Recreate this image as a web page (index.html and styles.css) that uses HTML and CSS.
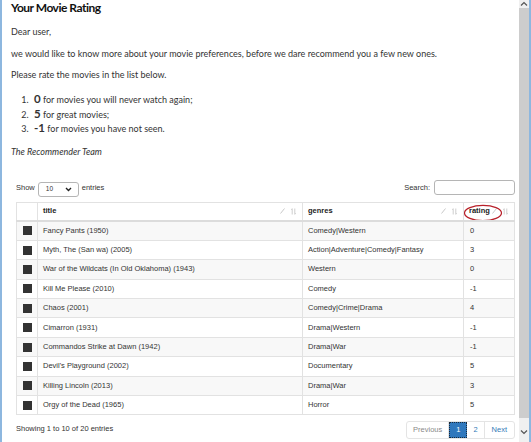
FILE: index.html
```html
<!DOCTYPE html>
<html lang="en">
<head>
    <meta charset="UTF-8"/>
    <meta name="viewport" content="width=device-width, initial-scale=1.0">
    <title>Your Movie Rating</title>
    <link rel="stylesheet" href="styles.css">
</head>

<body>
    <div class="window">
        <main class="page">
            <h1>Your Movie Rating</h1>
            <p>Dear user,</p>
            <p>we would like to know more about your movie preferences, before we dare recommend you a few new ones.</p>
            <p>Please rate the movies in the list below.</p>
            <ol class="scale">
                <li><b>0</b> for movies you will never watch again;</li>
                <li><b>5</b> for great movies;</li>
                <li><b>-1</b> for movies you have not seen.</li>
            </ol>
            <p class="sign">The Recommender Team</p>

            <section class="dt">
                <div class="dt-top">
                    <div class="dt-length">
                        Show
                        <span class="select">10
                            <svg width="7" height="5" viewBox="0 0 7 5"><path d="M1 1 L3.5 3.5 L6 1" fill="none" stroke="#222" stroke-width="1.4"/></svg>
                        </span>
                        entries
                    </div>
                    <div class="dt-search">
                        Search:
                        <span class="search-box"></span>
                    </div>
                </div>

                <table class="movies">
                    <colgroup>
                        <col class="c-check">
                        <col class="c-title">
                        <col class="c-genres">
                        <col class="c-rating">
                    </colgroup>
                    <thead>
                        <tr>
                            <th></th>
                            <th><div class="th-in"><span>title</span><span class="tools"><svg class="edit" width="5" height="6" viewBox="0 0 5 6"><path d="M0.5 5.5 L4.5 0.5" stroke="#c8c8c8" stroke-width="1"/></svg><svg class="sort" width="5" height="7" viewBox="0 0 5 7"><path d="M1.2 6.5 V0.8 M0.2 1.8 L1.2 0.6 M3.8 0.5 V6.2 M4.8 5.2 L3.8 6.4" stroke="#c8c8c8" stroke-width="0.9" fill="none"/></svg></span></div></th>
                            <th><div class="th-in"><span>genres</span><span class="tools"><svg class="edit" width="5" height="6" viewBox="0 0 5 6"><path d="M0.5 5.5 L4.5 0.5" stroke="#c8c8c8" stroke-width="1"/></svg><svg class="sort" width="5" height="7" viewBox="0 0 5 7"><path d="M1.2 6.5 V0.8 M0.2 1.8 L1.2 0.6 M3.8 0.5 V6.2 M4.8 5.2 L3.8 6.4" stroke="#c8c8c8" stroke-width="0.9" fill="none"/></svg></span></div></th>
                            <th class="marked"><div class="th-in"><span>rating</span><span class="tools"><svg class="edit" width="5" height="6" viewBox="0 0 5 6"><path d="M0.5 5.5 L4.5 0.5" stroke="#c8c8c8" stroke-width="1"/></svg><svg class="sort" width="5" height="7" viewBox="0 0 5 7"><path d="M1.2 6.5 V0.8 M0.2 1.8 L1.2 0.6 M3.8 0.5 V6.2 M4.8 5.2 L3.8 6.4" stroke="#c8c8c8" stroke-width="0.9" fill="none"/></svg></span></div>
                                <svg class="circle" width="40" height="18" viewBox="0 0 40 18"><ellipse cx="20" cy="9" rx="18.5" ry="7.6" fill="none" stroke="#b8202a" stroke-width="1.2"/></svg>
                            </th>
                        </tr>
                    </thead>
                    <tbody>
                        <tr><td><span class="box"></span></td><td>Fancy Pants (1950)</td><td>Comedy|Western</td><td>0</td></tr>
                        <tr><td><span class="box"></span></td><td>Myth, The (San wa) (2005)</td><td>Action|Adventure|Comedy|Fantasy</td><td>3</td></tr>
                        <tr><td><span class="box"></span></td><td>War of the Wildcats (In Old Oklahoma) (1943)</td><td>Western</td><td>0</td></tr>
                        <tr><td><span class="box"></span></td><td>Kill Me Please (2010)</td><td>Comedy</td><td>-1</td></tr>
                        <tr><td><span class="box"></span></td><td>Chaos (2001)</td><td>Comedy|Crime|Drama</td><td>4</td></tr>
                        <tr><td><span class="box"></span></td><td>Cimarron (1931)</td><td>Drama|Western</td><td>-1</td></tr>
                        <tr><td><span class="box"></span></td><td>Commandos Strike at Dawn (1942)</td><td>Drama|War</td><td>-1</td></tr>
                        <tr><td><span class="box"></span></td><td>Devil's Playground (2002)</td><td>Documentary</td><td>5</td></tr>
                        <tr><td><span class="box"></span></td><td>Killing Lincoln (2013)</td><td>Drama|War</td><td>3</td></tr>
                        <tr><td><span class="box"></span></td><td>Orgy of the Dead (1965)</td><td>Horror</td><td>5</td></tr>
                    </tbody>
                </table>

                <div class="dt-bottom">
                    <div class="dt-info">Showing 1 to 10 of 20 entries</div>
                    <ul class="pager">
                        <li class="disabled">Previous</li>
                        <li class="current">1</li>
                        <li>2</li>
                        <li>Next</li>
                    </ul>
                </div>
            </section>
        </main>

        <div class="scrollbar">
            <span class="arrow">
                <svg width="8" height="6" viewBox="0 0 8 6"><path d="M1 4.5 L4 1.5 L7 4.5" fill="none" stroke="#555" stroke-width="1.2"/></svg>
            </span>
            <div class="thumb"></div>
            <div class="track"></div>
            <span class="arrow">
                <svg width="8" height="6" viewBox="0 0 8 6"><path d="M1 1.5 L4 4.5 L7 1.5" fill="none" stroke="#555" stroke-width="1.2"/></svg>
            </span>
            <div class="track-end"></div>
        </div>
    </div>
</body>
</html>
```

FILE: styles.css
```css
* {
    margin: 0;
    padding: 0;
    box-sizing: border-box;
}

body {
    font-family: Lato, 'Open Sans', sans-serif;
    background-color: #fff;
    color: #333;
}

.window {
    display: flex;
    width: 531px;
    height: 442px;
    border-left: 2px solid #8db7df;
    border-right: 2px solid #8db7df;
    overflow: hidden;
}

.page {
    flex: 1;
    padding-left: 9px;
    font-size: 9px;
    line-height: 13px;
}

.page h1 {
    font-size: 12px;
    line-height: 16px;
    font-weight: bold;
    letter-spacing: -0.5px;
    color: #111;
    margin-bottom: 9px;
}

.page p {
    margin-bottom: 8.5px;
}

.scale {
    margin: 11px 0 9px 0;
    padding-left: 20px;
    line-height: 13.5px;
}

.scale li {
    padding-left: 3px;
}

.scale b {
    font-size: 11.5px;
}

.page p.sign {
    font-style: italic;
    margin-bottom: 0;
}

.dt {
    margin: 21px 4px 0 5px;
    font-family: 'Liberation Sans', Arial, sans-serif;
    font-size: 7.5px;
    line-height: 10px;
    color: #333;
}

.dt-top {
    display: flex;
    justify-content: space-between;
    align-items: center;
    height: 18px;
    margin-bottom: 5px;
}

.dt-length,
.dt-search {
    display: flex;
    align-items: center;
    gap: 3px;
}

.select {
    display: flex;
    align-items: center;
    justify-content: space-between;
    width: 41px;
    height: 15px;
    padding: 0 6px 0 7px;
    border: 1px solid #b5b5b5;
    border-radius: 3px;
    font-size: 6.5px;
    margin-top: 3px;
}

.search-box {
    display: block;
    width: 81px;
    height: 15px;
    border: 1px solid #b5b5b5;
    border-radius: 3px;
    margin-left: 1px;
}

.movies {
    width: 100%;
    table-layout: fixed;
    border-collapse: collapse;
    border: 1px solid #e2e2e2;
}

.c-check { width: 21px; }
.c-genres { width: 161px; }
.c-rating { width: 51px; }

.movies th,
.movies td {
    border: 1px solid #e2e2e2;
    text-align: left;
    white-space: nowrap;
    overflow: hidden;
}

.movies th {
    height: 19px;
    padding: 0 6px 0 5px;
    font-weight: bold;
    color: #222;
    border-bottom: 2px solid #dcdcdc;
}

.movies td {
    height: 19.4px;
    padding: 0 5px;
}

.movies td:last-child {
    padding-left: 6px;
}

.movies td:first-child {
    padding: 0;
    text-align: center;
}

.movies tbody tr:nth-child(odd) {
    background-color: #f8f8f8;
}

.th-in {
    display: flex;
    justify-content: space-between;
    align-items: center;
}

.tools {
    display: flex;
    align-items: center;
    gap: 6px;
}

.marked {
    position: relative;
    overflow: visible;
}

.marked .circle {
    position: absolute;
    left: -1px;
    top: 1px;
}

.box {
    display: inline-block;
    width: 9px;
    height: 9px;
    background-color: #333;
    vertical-align: middle;
}

.dt-bottom {
    display: flex;
    justify-content: space-between;
    align-items: center;
    margin-top: 6px;
}

.dt-info {
    padding-bottom: 2px;
}

.pager {
    list-style: none;
    display: flex;
    height: 18px;
    border: 1px solid #e4e4e4;
    border-radius: 3px;
}

.pager li {
    display: flex;
    align-items: center;
    padding: 0 6px;
    color: #337ab7;
}

.pager li.disabled {
    color: #8a8a8a;
    padding: 0 6px;
    border-right: 1px solid #e4e4e4;
}

.pager li.current {
    background-color: #2f78bd;
    color: #fff;
    padding: 0 7px;
    outline: 1px dotted #1a2a3a;
    outline-offset: -1px;
}

.pager li:last-child {
    border-left: 1px solid #e4e4e4;
    padding: 0 7px;
}

.scrollbar {
    width: 10px;
    display: flex;
    flex-direction: column;
    background-color: #f0f0f0;
}

.arrow {
    display: flex;
    justify-content: center;
    align-items: center;
    height: 8px;
}

.thumb {
    height: 410px;
    background-color: #cdcdcd;
}

.track {
    flex: 1;
}

.track-end {
    height: 6px;
}
```
